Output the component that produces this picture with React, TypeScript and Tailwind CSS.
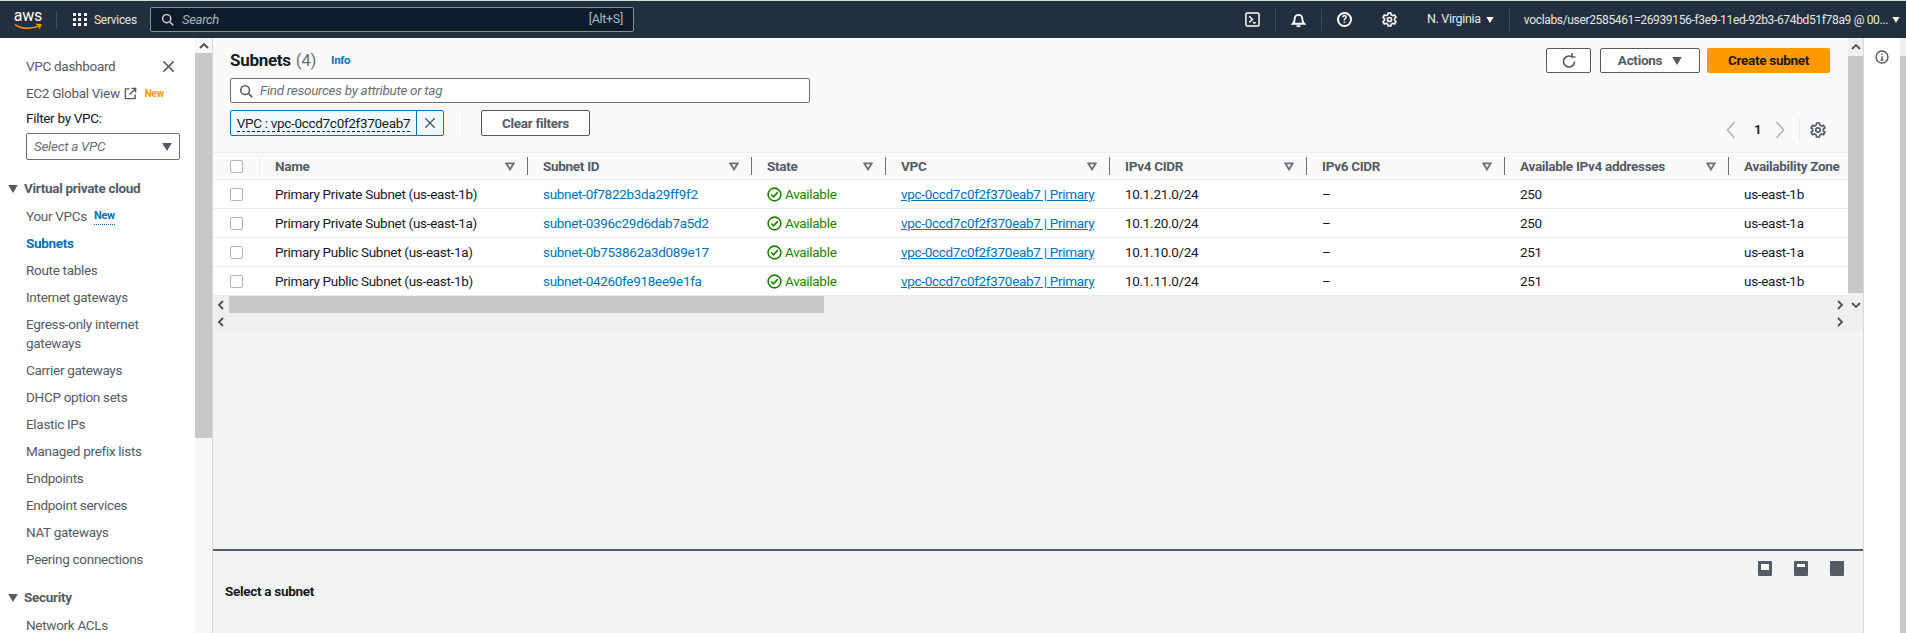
import React from "react";

const F = "font-['Roboto','Liberation_Sans',sans-serif]";

function Caret({ className = "" }: { className?: string }) {
  return (
    <svg viewBox="0 0 12 10" className={className} fill="currentColor">
      <path d="M0 0h12L6 10z" />
    </svg>
  );
}

function Chevron({ dir, className = "" }: { dir: "l" | "r" | "u" | "d"; className?: string }) {
  const d = { l: "M7 1 3 5l4 4", r: "M3 1l4 4-4 4", u: "M1 7l4-4 4 4", d: "M1 3l4 4 4-4" }[dir];
  return (
    <svg viewBox="0 0 10 10" className={className} fill="none" stroke="currentColor" strokeWidth="1.8">
      <path d={d} />
    </svg>
  );
}

function Gear({ className = "" }: { className?: string }) {
  return (
    <svg viewBox="0 0 16 16" className={className} fill="none" stroke="currentColor" strokeWidth="1.7">
      <path d="M6.6 1h2.8l.4 2 1.8 1 1.9-.7 1.4 2.4-1.5 1.3v2l1.5 1.3-1.4 2.4-1.9-.7-1.8 1-.4 2H6.6l-.4-2-1.8-1-1.9.7L1.1 10.3l1.5-1.3V7L1.1 5.7l1.4-2.4 1.9.7 1.8-1z" />
      <circle cx="8" cy="8" r="2.2" />
    </svg>
  );
}

function Search({ className = "" }: { className?: string }) {
  return (
    <svg viewBox="0 0 16 16" className={className} fill="none" stroke="currentColor" strokeWidth="1.8">
      <circle cx="7" cy="7" r="5" />
      <path d="M11 11l4 4" />
    </svg>
  );
}

function Filter() {
  return (
    <svg viewBox="0 0 12 10" className="w-[10px] h-[9px] text-[#687078]" fill="none" stroke="currentColor" strokeWidth="2.2">
      <path d="M1.5 1.2h9L6 8.5z" />
    </svg>
  );
}

function X({ className = "" }: { className?: string }) {
  return (
    <svg viewBox="0 0 14 14" className={className} fill="none" stroke="currentColor" strokeWidth="1.6">
      <path d="M1.5 1.5l11 11M12.5 1.5l-11 11" />
    </svg>
  );
}

function AwsLogo() {
  return (
    <div className="relative w-[30px] h-[24px] flex flex-col items-center">
      <span className="text-[16px] leading-[15px] text-white tracking-[-0.2px]">aws</span>
      <svg viewBox="0 0 30 8" className="w-[29px] h-[8px] text-[#ff9900]" fill="none" stroke="currentColor" strokeWidth="1.6">
        <path d="M1 1.5c7 5 18 5 25 1M23 1.2l4.5.6-1.6 3.8" />
      </svg>
    </div>
  );
}

function SideItem({ children, active }: { children: React.ReactNode; active?: boolean }) {
  return (
    <div className={`pl-[26px] h-[27px] flex items-center text-[13.5px] ${active ? "text-[#0073bb] font-bold" : "text-[#545b64]"}`}>
      {children}
    </div>
  );
}

const GRID = "grid grid-cols-[47px_268px_224px_134px_224px_197px_198px_224px_119px]";

const rows = [
  ["Primary Private Subnet (us-east-1b)", "subnet-0f7822b3da29ff9f2", "10.1.21.0/24", "250", "us-east-1b"],
  ["Primary Private Subnet (us-east-1a)", "subnet-0396c29d6dab7a5d2", "10.1.20.0/24", "250", "us-east-1a"],
  ["Primary Public Subnet (us-east-1a)", "subnet-0b753862a3d089e17", "10.1.10.0/24", "251", "us-east-1a"],
  ["Primary Public Subnet (us-east-1b)", "subnet-04260fe918ee9e1fa", "10.1.11.0/24", "251", "us-east-1b"],
];

function Head({ label, last }: { label: string; last?: boolean }) {
  return (
    <div className="flex items-center pl-[15px] h-full text-[13.5px] font-bold text-[#545b64] whitespace-nowrap overflow-hidden">
      <span className="flex-1">{label}</span>
      {!last && (
        <>
          <Filter />
          <span className="ml-[12px] w-px h-[18px] bg-[#687078]" />
        </>
      )}
    </div>
  );
}

function Check() {
  return <span className="block w-[13px] h-[13px] border border-[#aab7b8] rounded-[2px] bg-white ml-[17px]" />;
}

function PanelIcon({ h }: { h: string }) {
  return (
    <div className="w-[14px] h-[15px] border-[3px] border-[#545b64] rounded-[1px] flex flex-col justify-end bg-white">
      <div className={`${h} bg-[#545b64]`} />
    </div>
  );
}

export default function App() {
  return (
    <div className={`${F} h-screen w-full overflow-hidden flex flex-col bg-white text-[13.5px] tracking-[-0.3px]`}>
      <div className="h-px bg-[#d5dbdb]" />
      <header className="h-[37px] bg-[#232f3e] flex items-center text-white shrink-0">
        <div className="pl-[13px] w-[56px]"><AwsLogo /></div>
        <span className="w-px h-[20px] bg-[#414b58]" />
        <div className="flex items-center ml-[16px] w-[76px]">
          <div className="grid grid-cols-3 gap-[2px] w-[14px]">
            {Array.from({ length: 9 }).map((_, i) => (
              <span key={i} className="w-[3px] h-[3px] bg-white block" />
            ))}
          </div>
          <span className="ml-[7px] text-[12px] text-[#e5e8e8]">Services</span>
        </div>
        <div className="ml-[1px] w-[484px] h-[25px] bg-[#0f1b2a] border border-[#879596] rounded-[2px] flex items-center px-[10px] text-[#aab7b8] text-[13px]">
          <Search className="w-[13px] h-[13px] text-[#d5dbdb]" />
          <span className="ml-[8px] italic flex-1">Search</span>
          <span className="text-[12.5px]">[Alt+S]</span>
        </div>
        <div className="flex-1" />
        <svg viewBox="0 0 16 16" className="w-[15px] h-[15px]" fill="none" stroke="currentColor" strokeWidth="1.6">
          <rect x="1" y="1" width="14" height="14" rx="1.5" />
          <path d="M4.5 4.5L8 8l-3.5 3M8.5 11.5h3" />
        </svg>
        <span className="ml-[15px] w-px h-[22px] bg-[#414b58]" />
        <svg viewBox="0 0 16 16" className="ml-[15px] w-[15px] h-[15px]" fill="none" stroke="currentColor" strokeWidth="2">
          <path d="M2 12.5c1.5-1.5 2-3 2-5.5a4 4 0 018 0c0 2.5.5 4 2 5.5zM6 15h4" />
        </svg>
        <span className="ml-[15px] w-px h-[22px] bg-[#414b58]" />
        <div className="ml-[15px] w-[15px] h-[15px] rounded-full border-2 border-white flex items-center justify-center text-[10px] font-bold tracking-normal">?</div>
        <Gear className="ml-[30px] w-[15px] h-[15px]" />
        <span className="ml-[30px] text-[12.5px] text-[#e5e8e8]">N. Virginia</span>
        <Caret className="ml-[5px] w-[8px] h-[6px]" />
        <span className="ml-[15px] w-px h-[22px] bg-[#414b58]" />
        <span className="ml-[14px] text-[12px] text-[#e5e8e8] whitespace-nowrap tracking-[-0.34px]">voclabs/user2585461=26939156-f3e9-11ed-92b3-674bd51f78a9 @ 00...</span>
        <Caret className="ml-[4px] mr-[6px] w-[8px] h-[6px]" />
      </header>

      <div className="flex-1 flex min-h-0">
        <aside className="w-[195px] shrink-0 overflow-hidden pt-[15px]">
          <div className="flex items-center justify-between pr-[20px]">
            <SideItem>VPC dashboard</SideItem>
            <X className="w-[13px] h-[13px] text-[#545b64]" />
          </div>
          <SideItem>
            EC2 Global View
            <svg viewBox="0 0 14 14" className="ml-[4px] w-[13px] h-[13px] text-[#545b64]" fill="none" stroke="currentColor" strokeWidth="1.5">
              <path d="M6 2H1.5v10.5H12V8M8 1.5h4.5V6M12.5 1.5L6 8" />
            </svg>
            <span className="ml-[8px] text-[10px] font-bold text-[#ff9900]">New</span>
          </SideItem>
          <div className="pl-[26px] h-[23px] flex items-center text-[#16191f]">Filter by VPC:</div>
          <div className="ml-[26px] mr-[15px] mt-[3px] h-[27px] border border-[#687078] rounded-[2px] flex items-center px-[7px] text-[#687078] italic">
            <span className="flex-1">Select a VPC</span>
            <Caret className="w-[10px] h-[8px] text-[#545b64]" />
          </div>
          <div className="mt-[15px] h-[27px] flex items-center pl-[8px] font-bold text-[#545b64]">
            <Caret className="w-[10px] h-[8px] mr-[6px]" />
            Virtual private cloud
          </div>
          <div className="mt-[1px]" />
          <SideItem>
            Your VPCs
            <span className="ml-[7px] text-[11px] font-bold text-[#0073bb] border-b border-dotted border-[#0073bb]">New</span>
          </SideItem>
          <SideItem active>Subnets</SideItem>
          <SideItem>Route tables</SideItem>
          <SideItem>Internet gateways</SideItem>
          <div className="pl-[26px] pr-[8px] py-[4px] leading-[19px] text-[#545b64]">Egress-only internet gateways</div>
          <SideItem>Carrier gateways</SideItem>
          <SideItem>DHCP option sets</SideItem>
          <SideItem>Elastic IPs</SideItem>
          <SideItem>Managed prefix lists</SideItem>
          <SideItem>Endpoints</SideItem>
          <SideItem>Endpoint services</SideItem>
          <SideItem>NAT gateways</SideItem>
          <SideItem>Peering connections</SideItem>
          <div className="mt-[11px] h-[27px] flex items-center pl-[8px] font-bold text-[#545b64]">
            <Caret className="w-[10px] h-[8px] mr-[6px]" />
            Security
          </div>
          <div className="mt-[1px]" />
          <SideItem>Network ACLs</SideItem>
        </aside>

        <div className="w-[17px] shrink-0 flex flex-col bg-[#f7f7f7]">
          <div className="h-[15px] flex items-center justify-center">
            <Chevron dir="u" className="w-[10px] h-[10px] text-[#505050]" />
          </div>
          <div className="h-[385px] bg-[#c8c8c8]" />
        </div>

        <main className="w-[1652px] shrink-0 flex flex-col bg-[#f2f3f3] border-l border-r border-[#d5dbdb]">
          <div className="flex h-[292px] shrink-0">
            <div className="w-[1635px] shrink-0 flex flex-col">
              <div className="h-[115px] bg-[#fafafa] border-b border-[#eaeded] pl-[17px] pr-[16px] shrink-0">
                <div className="flex items-center justify-between pt-[10px] pr-[2px]">
                  <div className="flex items-center h-[25px]">
                    <span className="text-[17px] font-bold text-[#16191f]">Subnets</span>
                    <span className="ml-[5px] text-[17px] text-[#687078]">(4)</span>
                    <span className="ml-[15px] text-[11.5px] font-bold text-[#0073bb]">Info</span>
                  </div>
                  <div className="flex items-center">
                    <div className="w-[45px] h-[25px] border border-[#545b64] rounded-[2px] bg-white flex items-center justify-center text-[#545b64]">
                      <svg viewBox="0 0 16 16" className="w-[16px] h-[16px]" fill="none" stroke="currentColor" strokeWidth="1.6">
                        <path d="M13.5 8.5A5.5 5.5 0 112.5 8.5a5.5 5.5 0 018.5-4.6M11 0v4h3.5" />
                      </svg>
                    </div>
                    <div className="ml-[9px] w-[100px] h-[25px] border border-[#545b64] rounded-[2px] bg-white flex items-center justify-center font-bold text-[#545b64]">
                      Actions
                      <Caret className="ml-[10px] w-[10px] h-[8px]" />
                    </div>
                    <div className="ml-[7px] w-[123px] h-[25px] rounded-[2px] bg-[#ff9900] flex items-center justify-center font-bold text-[#16191f]">
                      Create subnet
                    </div>
                  </div>
                </div>
                <div className="mt-[5px] w-[580px] h-[25px] border border-[#687078] rounded-[2px] bg-white flex items-center px-[8px] text-[#687078] italic">
                  <Search className="w-[14px] h-[14px] text-[#545b64] mr-[7px]" />
                  Find resources by attribute or tag
                </div>
                <div className="mt-[7px] flex items-start">
                  <div className="w-[214px] h-[26px] border border-[#0073bb] rounded-[2px] bg-[#f1faff] flex text-[#16191f]">
                    <div className="w-[185px] flex items-center justify-center">
                      <span className="border-b border-dashed border-[#16191f] leading-[16px] whitespace-nowrap">VPC : vpc-0ccd7c0f2f370eab7</span>
                    </div>
                    <div className="flex-1 border-l border-[#0073bb] flex items-center justify-center">
                      <X className="w-[12px] h-[12px] text-[#545b64]" />
                    </div>
                  </div>
                  <span className="ml-[18px] w-px h-[26px] bg-[#eaeded]" />
                  <div className="ml-[18px] w-[109px] h-[26px] border border-[#545b64] rounded-[2px] bg-white flex items-center justify-center font-bold text-[#545b64]">
                    Clear filters
                  </div>
                  <div className="flex-1" />
                  <div className="mt-[8px] flex items-center text-[#aab7b8] pr-[6px]">
                    <svg viewBox="0 0 10 18" className="w-[10px] h-[18px]" fill="none" stroke="currentColor" strokeWidth="1.6">
                      <path d="M8.5 1 1.5 9l7 8" />
                    </svg>
                    <span className="ml-[18px] mr-[14px] font-bold text-[12.5px] text-[#16191f]">1</span>
                    <svg viewBox="0 0 10 18" className="w-[10px] h-[18px]" fill="none" stroke="currentColor" strokeWidth="1.6">
                      <path d="M1.5 1l7 8-7 8" />
                    </svg>
                    <span className="ml-[14px] w-px h-[24px] bg-[#eaeded]" />
                    <Gear className="ml-[10px] w-[16px] h-[16px] text-[#545b64]" />
                  </div>
                </div>
              </div>
              <div className={`${GRID} h-[27px] bg-[#fafafa] border-b border-[#eaeded] shrink-0`}>
                <div className="flex items-center h-full">
                  <Check />
                  <span className="ml-[16px] w-px h-[18px] bg-[#eaeded]" />
                </div>
                <Head label="Name" />
                <Head label="Subnet ID" />
                <Head label="State" />
                <Head label="VPC" />
                <Head label="IPv4 CIDR" />
                <Head label="IPv6 CIDR" />
                <Head label="Available IPv4 addresses" />
                <Head label="Availability Zone" last />
              </div>
              {rows.map((r) => (
                <div key={r[1]} className={`${GRID} h-[29px] bg-white border-b border-[#eaeded] shrink-0 text-[#16191f]`}>
                  <div className="flex items-center"><Check /></div>
                  <div className="flex items-center pl-[15px] whitespace-nowrap">{r[0]}</div>
                  <div className="flex items-center pl-[15px] text-[#0073bb] whitespace-nowrap">{r[1]}</div>
                  <div className="flex items-center pl-[15px] text-[#1d8102] whitespace-nowrap">
                    <svg viewBox="0 0 16 16" className="w-[15px] h-[15px] mr-[3px]" fill="none" stroke="currentColor" strokeWidth="1.7">
                      <circle cx="8" cy="8" r="6.8" />
                      <path d="M4.5 8l2.5 2.5 4.5-5" />
                    </svg>
                    Available
                  </div>
                  <div className="flex items-center pl-[15px] text-[#0073bb] underline whitespace-nowrap">vpc-0ccd7c0f2f370eab7 | Primary</div>
                  <div className="flex items-center pl-[15px]">{r[2]}</div>
                  <div className="flex items-center pl-[15px]">–</div>
                  <div className="flex items-center pl-[15px]">{r[3]}</div>
                  <div className="flex items-center pl-[15px]">{r[4]}</div>
                </div>
              ))}
              <div className="h-[17px] flex items-center bg-[#f0f0f0] shrink-0 relative">
                <Chevron dir="l" className="absolute left-[3px] w-[10px] h-[10px] text-[#505050]" />
                <div className="ml-[16px] w-[595px] h-full bg-[#c8c8c8]" />
                <Chevron dir="r" className="absolute right-[3px] w-[10px] h-[10px] text-[#505050]" />
              </div>
              <div className="h-[17px] flex items-center bg-[#f0f0f0] shrink-0 relative">
                <Chevron dir="l" className="absolute left-[3px] w-[10px] h-[10px] text-[#505050]" />
                <Chevron dir="r" className="absolute right-[3px] w-[10px] h-[10px] text-[#505050]" />
              </div>
            </div>
            <div className="w-[15px] shrink-0 flex flex-col bg-[#f0f0f0]">
              <div className="h-[18px] flex items-center justify-center">
                <Chevron dir="u" className="w-[10px] h-[10px] text-[#505050]" />
              </div>
              <div className="h-[237px] bg-[#c8c8c8]" />
              <div className="h-[24px] flex items-center justify-center">
                <Chevron dir="d" className="w-[10px] h-[10px] text-[#505050]" />
              </div>
            </div>
          </div>
          <div className="flex-1" />
          <div className="h-[84px] shrink-0 border-t-2 border-[#545b64] pl-[12px] relative">
            <div className="mt-[30px] font-bold text-[#16191f]">Select a subnet</div>
            <div className="absolute right-[19px] top-[10px] flex gap-[22px]">
              <PanelIcon h="h-[3px]" />
              <PanelIcon h="h-[6px]" />
              <PanelIcon h="h-[9px]" />
            </div>
          </div>
        </main>

        <div className="flex-1 flex min-w-0">
          <div className="flex-1 flex justify-center pt-[12px]">
            <svg viewBox="0 0 16 16" className="w-[14px] h-[14px] text-[#545b64]" fill="none" stroke="currentColor" strokeWidth="1.6">
              <circle cx="8" cy="8" r="6.8" />
              <path d="M8 7v4.5M6.3 11.5h3.4M8 4v1.6" />
            </svg>
          </div>
          <div className="w-[6px] flex flex-col bg-[#f0f0f0]">
            <div className="h-[18px]" />
            <div className="flex-1 bg-[#c8c8c8]" />
          </div>
        </div>
      </div>
    </div>
  );
}
